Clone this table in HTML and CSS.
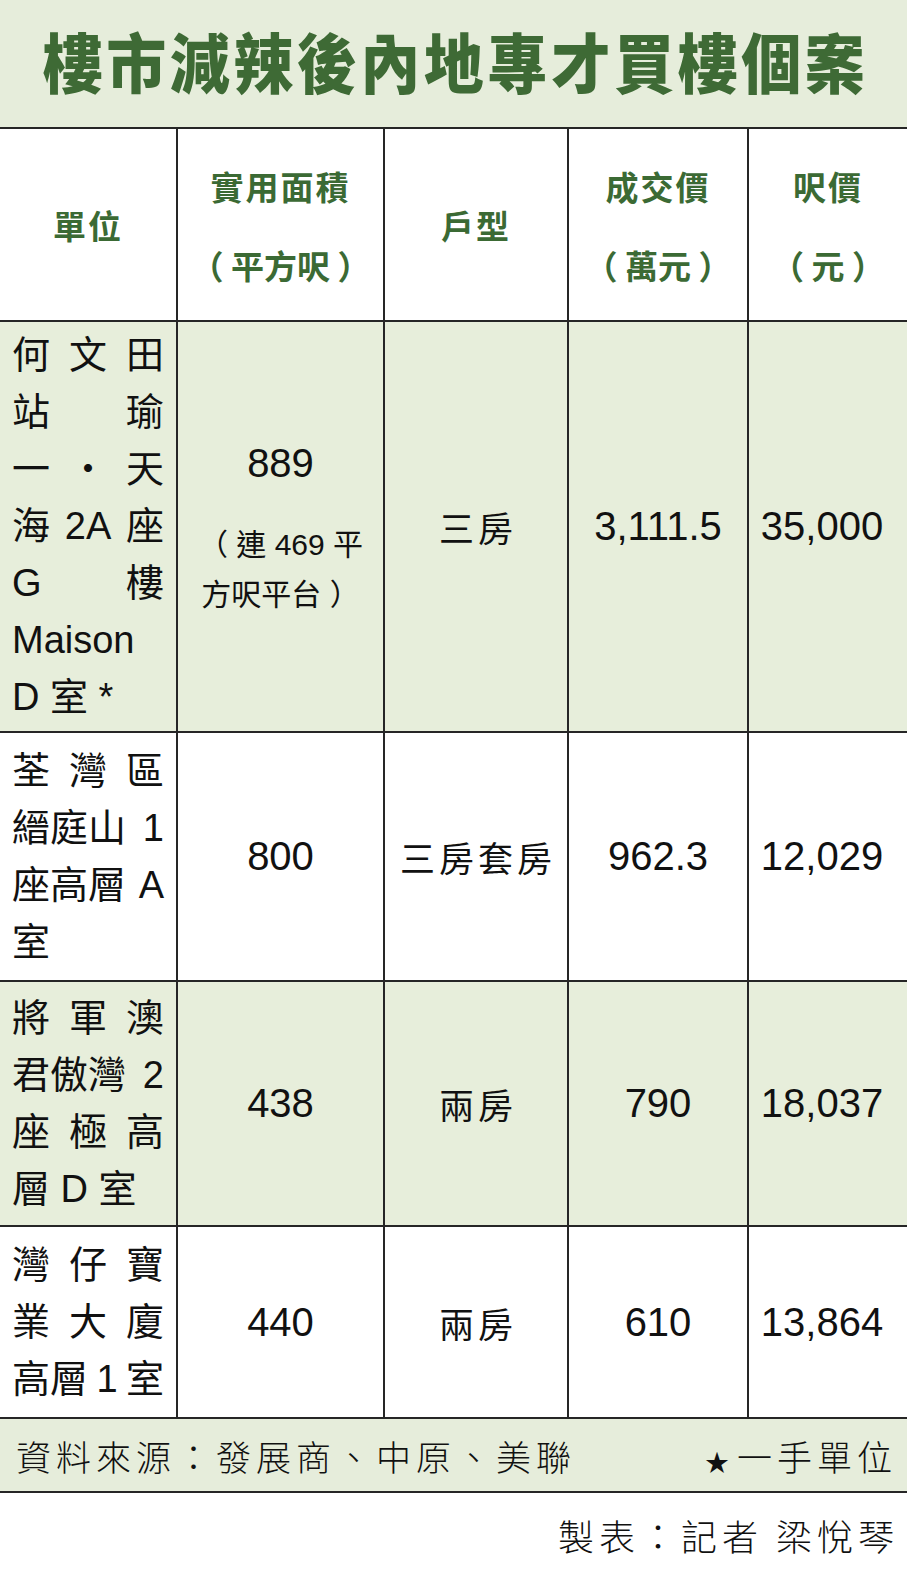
FILE: index.html
```html
<!DOCTYPE html>
<html lang="zh-Hant">
<head>
<meta charset="utf-8">
<title>樓市減辣後內地專才買樓個案</title>
<link rel="stylesheet" href="styles.css">
</head>
<body>
<div class="page">
  <header class="title"><h1>樓市減辣後內地專才買樓個案</h1></header>

  <div class="grid">
    <div class="cell head"><div>單位</div></div>
    <div class="cell head two"><div>實用面積</div><div class="paren">（ 平方呎 ）</div></div>
    <div class="cell head"><div>戶型</div></div>
    <div class="cell head two"><div>成交價</div><div class="paren">（ 萬元 ）</div></div>
    <div class="cell head two"><div>呎價</div><div class="paren">（ 元 ）</div></div>

    <div class="cell unit green">
      <div class="ln j"><span>何</span><span>文</span><span>田</span></div>
      <div class="ln j"><span>站</span><span>瑜</span></div>
      <div class="ln j"><span>一</span><span>・</span><span>天</span></div>
      <div class="ln j"><span>海</span><span>2A</span><span>座</span></div>
      <div class="ln j"><span>G</span><span>樓</span></div>
      <div class="ln">Maison</div>
      <div class="ln">D 室 *</div>
    </div>
    <div class="cell green area1">
      <div class="num">889</div>
      <div class="note">（ 連 469 平<br>方呎平台 ）</div>
    </div>
    <div class="cell green val">三房</div>
    <div class="cell green num">3,111.5</div>
    <div class="cell green num last">35,000</div>

    <div class="cell unit">
      <div class="ln j"><span>荃</span><span>灣</span><span>區</span></div>
      <div class="ln j"><span>縉庭山</span><span>1</span></div>
      <div class="ln j"><span>座高層</span><span>A</span></div>
      <div class="ln">室</div>
    </div>
    <div class="cell num">800</div>
    <div class="cell val">三房套房</div>
    <div class="cell num">962.3</div>
    <div class="cell num last">12,029</div>

    <div class="cell unit green">
      <div class="ln j"><span>將</span><span>軍</span><span>澳</span></div>
      <div class="ln j"><span>君傲灣</span><span>2</span></div>
      <div class="ln j"><span>座</span><span>極</span><span>高</span></div>
      <div class="ln">層 D 室</div>
    </div>
    <div class="cell green num">438</div>
    <div class="cell green val">兩房</div>
    <div class="cell green num">790</div>
    <div class="cell green num last">18,037</div>

    <div class="cell unit">
      <div class="ln j"><span>灣</span><span>仔</span><span>寶</span></div>
      <div class="ln j"><span>業</span><span>大</span><span>廈</span></div>
      <div class="ln j"><span>高層</span><span>1</span><span>室</span></div>
    </div>
    <div class="cell num">440</div>
    <div class="cell val">兩房</div>
    <div class="cell num">610</div>
    <div class="cell num last">13,864</div>
  </div>

  <footer class="source">
    <span>資料來源：發展商、中原、美聯</span>
    <span class="first"><span class="star">★</span>一手單位</span>
  </footer>

  <p class="credit">製表：記者&nbsp;梁悅琴</p>
</div>
</body>
</html>
```

FILE: styles.css
```css
html, body {
  margin: 0;
  padding: 0;
  background: #ffffff;
}

.page {
  width: 907px;
  font-family: "Liberation Sans", "Noto Sans CJK TC", sans-serif;
  color: #111111;
}

.title {
  height: 127px;
  box-sizing: border-box;
  padding-bottom: 7px;
  background: #e6eddb;
  display: flex;
  align-items: center;
  justify-content: center;
}

.title h1 {
  margin: 0;
  padding-left: 4px;
  font-family: "Noto Sans CJK TC", sans-serif;
  font-weight: 900;
  font-size: 60px;
  letter-spacing: 3.5px;
  line-height: 1;
  color: #3e6a35;
  transform: scaleY(1.08);
}

.grid {
  display: grid;
  grid-template-columns: 176px 205px 182px 178px 158px;
  grid-template-rows: 191px 409px 247px 243px 190px;
  column-gap: 2px;
  row-gap: 2px;
  background: #262626;
  border-top: 2px solid #262626;
  border-bottom: 2px solid #262626;
}

.cell {
  background: #ffffff;
  display: flex;
  flex-direction: column;
  align-items: center;
  justify-content: center;
  text-align: center;
}

.cell.green {
  background: #e7eedb;
}

.head {
  font-family: "Noto Sans CJK TC", sans-serif;
  font-weight: 700;
  font-size: 33px;
  letter-spacing: 2px;
  color: #3b6a34;
  line-height: 40px;
}

.head.two {
  gap: 39px;
  padding-top: 2px;
}

.head .paren {
  letter-spacing: 0;
  white-space: pre;
}

.unit {
  align-items: stretch;
  justify-content: center;
  padding: 0 12px 0 12px;
  font-size: 38px;
  line-height: 57px;
  text-align: left;
}

.ln {
  white-space: nowrap;
}

.ln.j {
  display: flex;
  justify-content: space-between;
}

.num {
  font-size: 40px;
}

.num.last {
  padding-right: 12px;
}

.val {
  font-family: "Noto Sans CJK TC", sans-serif;
  font-size: 35px;
  letter-spacing: 4px;
  padding-left: 4px;
}

.area1 {
  padding-top: 10px;
}

.area1 .num {
  line-height: 40px;
  margin-bottom: 37px;
}

.area1 .note {
  font-size: 30px;
  line-height: 50px;
  white-space: nowrap;
}

.source {
  height: 72px;
  background: #e6eddb;
  border-bottom: 2px solid #262626;
  display: flex;
  align-items: center;
  justify-content: space-between;
  padding: 0 10px 0 16px;
  font-family: "Noto Sans CJK TC", sans-serif;
  font-weight: 300;
  font-size: 35px;
  letter-spacing: 5px;
}

.source .star {
  font-size: 24px;
  margin-right: 8px;
  letter-spacing: 0;
}

.credit {
  margin: 0;
  padding: 20px 8px 0 0;
  text-align: right;
  font-family: "Noto Sans CJK TC", sans-serif;
  font-weight: 300;
  font-size: 36px;
  letter-spacing: 5px;
  line-height: 44px;
}
```
